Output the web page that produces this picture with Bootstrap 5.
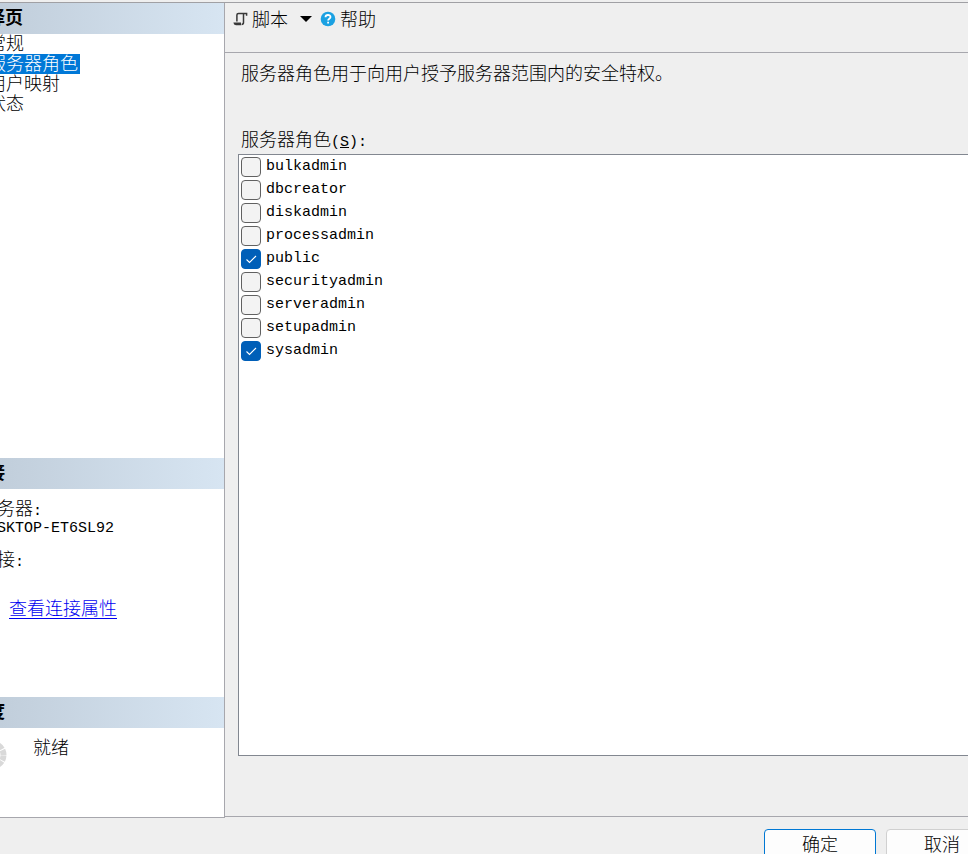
<!DOCTYPE html>
<html lang="zh-CN">
<head>
<meta charset="utf-8">
<meta name="viewport" content="width=device-width, initial-scale=1">
<title>登录属性</title>
<link href="https://cdn.jsdelivr.net/npm/bootstrap@5.3.0/dist/css/bootstrap.min.css" rel="stylesheet">
<style>
body { background: #efefef; color: #000; font-family: "Noto Sans CJK SC", sans-serif; font-weight: 300; font-size: 18px; line-height: 20px; }
.latin { font-family: "Liberation Mono", monospace; font-size: 15px; font-weight: 400; }
.work-area { border-top: 1px solid #a0a0a4; margin-top: 2px; min-height: 0; }
.side { width: 225px; background: #fff; border-right: 1px solid #a7a7ad; border-bottom: 1px solid #a7a7ad; }
.side-title { height: 31px; line-height: 27px; font-size: 18px; font-weight: 700; color: #000; background: linear-gradient(90deg, #c1cedb, #d7e5f2); }
.side-title span { margin-left: -31px; }
.page-list { margin-left: -12px; }
.page-list a { color: #000; text-decoration: none; line-height: 16px; padding: 0 2px 4px 0; }
.page-list a.active { background: #0078d7; color: #fff; }
.connection { height: 239px; }
.connection-info { margin-left: -21px; padding-top: 8px; }
.connection-info dt { font-weight: 300; height: 23px; }
.connection-info dd { line-height: 18px; margin-bottom: 10px; }
.connection-link { color: #0000f0; margin: 40px 0 0 9px; line-height: 20px; text-underline-offset: 3px; text-decoration-thickness: 1px; }
.connection-info dl { height: 60px; }
.progress-panel { height: 120px; }
.progress-state { margin-left: -23px; padding-top: 8px; gap: 26px; }
.progress-state svg { margin-top: 4px; }
.content-pane { border-bottom: 1px solid #a7a7ad; margin-bottom: 1px; }
.toolbar { height: 50px; padding: 6px 8px; border-bottom: 1px solid #a7a7ad; }
.tool { border: 0; background: none; padding: 0; color: #000; font-weight: 300; line-height: 18px; height: 20px; }
.tool span { padding-bottom: 2px; }
.roles { padding: 9px 0 60px 13px; }
.roles-note { margin: 0 3px 46px; }
.roles-label { margin: 0 3px 1px; }
.roles-box { background: #fff; border: 1px solid #828790; border-right: 0; }
.role { height: 23px; padding-left: 2px; gap: 5px; }
.role label { line-height: 24px; color: #000; }
.role .form-check-input { width: 20px; height: 20px; margin: 2px 0 0; border: 1px solid #616161; border-radius: 4px; background-color: #f3f3f3; }
.role .form-check-input:checked { background-color: #005fb8; border-color: #005fb8; background-size: 20px 20px; background-image: url("data:image/svg+xml,%3Csvg xmlns='http://www.w3.org/2000/svg' viewBox='0 0 20 20'%3E%3Cpath d='M5.5 10.5l3 3 6.5-6.5' fill='none' stroke='%23fff' stroke-width='1.1'/%3E%3C/svg%3E"); }
.actions { height: 36px; padding-top: 11px; gap: 10px; margin-right: -30px; }
.actions .btn { width: 112px; height: 34px; padding: 0 0 6px; line-height: 26px; font-size: 18px; font-weight: 300; background: #fdfdfd; border: 1px solid #d0d0d0; border-radius: 4px; color: #000; }
.actions .btn-ok { border-color: #0078d4; }
</style>
</head>
<body class="vh-100 overflow-hidden d-flex flex-column">
<div class="work-area d-flex flex-grow-1">
  <aside class="side d-flex flex-column flex-shrink-0 overflow-hidden">
    <section class="flex-grow-1">
      <h2 class="side-title m-0 text-nowrap"><span>选择页</span></h2>
      <nav class="page-list d-flex flex-column align-items-start text-nowrap">
        <a href="#general">常规</a>
        <a href="#roles" class="active" aria-current="page">服务器角色</a>
        <a href="#mapping">用户映射</a>
        <a href="#status">状态</a>
      </nav>
    </section>
    <section class="connection">
      <h2 class="side-title m-0 text-nowrap"><span>连接</span></h2>
      <div class="connection-info text-nowrap">
        <dl class="m-0">
          <dt>服务器<span class="latin">:</span></dt>
          <dd class="latin">DESKTOP-ET6SL92</dd>
          <dt>连接<span class="latin">:</span></dt>
        </dl>
      </div>
      <a class="connection-link d-inline-block" href="#connection">查看连接属性</a>
    </section>
    <section class="progress-panel">
      <h2 class="side-title m-0 text-nowrap"><span>进度</span></h2>
      <div class="progress-state d-flex align-items-start">
        <svg width="30" height="30" viewBox="0 0 30 30" aria-hidden="true"><circle cx="15" cy="15" r="11.5" fill="none" stroke="#d9d9d9" stroke-width="6" stroke-dasharray="5 1.02" stroke-dashoffset="-.5"/></svg>
        <span>就绪</span>
      </div>
    </section>
  </aside>
  <main class="content-pane flex-grow-1 d-flex flex-column">
    <div class="toolbar d-flex align-items-start">
      <button type="button" class="tool d-flex align-items-center">
        <svg class="me-1" width="15" height="14" viewBox="0 0 15 14" aria-hidden="true"><path d="M3.9 9.5V3Q3.9 1.4 5.5 1.4H13.6V3.8M10.5 1.8V10.5Q10.5 12.4 8.6 12.4" fill="none" stroke="#383838" stroke-width="1.5"/><path d="M.4 10.6H8V13.2H3Q.6 13.2 .4 10.6z" fill="#383838"/></svg>
        <span>脚本</span>
        <svg class="ms-2" width="20" height="8" viewBox="0 0 20 8" aria-hidden="true"><path d="M4 1h12L10 7z" fill="#000"/></svg>
      </button>
      <button type="button" class="tool d-flex align-items-center ms-1">
        <svg width="16" height="16" viewBox="0 0 16 16" aria-hidden="true"><circle cx="8" cy="8" r="7.3" fill="#1ba1e2"/><path d="M5.5 6.2C5.5 3.3 10.5 3.3 10.5 6.1 10.5 7.8 8.1 7.8 8.1 9.6M8.1 10.8v1.8" fill="none" stroke="#fff" stroke-width="1.8"/></svg>
        <span class="ms-1">帮助</span>
      </button>
    </div>
    <div class="roles d-flex flex-column flex-grow-1">
      <p class="roles-note">服务器角色用于向用户授予服务器范围内的安全特权。</p>
      <div class="roles-label" id="roles-label">服务器角色<span class="latin">(<u>S</u>):</span></div>
      <div class="roles-box flex-grow-1" role="group" aria-labelledby="roles-label">
        <div class="role d-flex align-items-start"><input class="form-check-input" type="checkbox" id="r1"><label class="latin" for="r1">bulkadmin</label></div>
        <div class="role d-flex align-items-start"><input class="form-check-input" type="checkbox" id="r2"><label class="latin" for="r2">dbcreator</label></div>
        <div class="role d-flex align-items-start"><input class="form-check-input" type="checkbox" id="r3"><label class="latin" for="r3">diskadmin</label></div>
        <div class="role d-flex align-items-start"><input class="form-check-input" type="checkbox" id="r4"><label class="latin" for="r4">processadmin</label></div>
        <div class="role d-flex align-items-start"><input class="form-check-input" type="checkbox" id="r5" checked><label class="latin" for="r5">public</label></div>
        <div class="role d-flex align-items-start"><input class="form-check-input" type="checkbox" id="r6"><label class="latin" for="r6">securityadmin</label></div>
        <div class="role d-flex align-items-start"><input class="form-check-input" type="checkbox" id="r7"><label class="latin" for="r7">serveradmin</label></div>
        <div class="role d-flex align-items-start"><input class="form-check-input" type="checkbox" id="r8"><label class="latin" for="r8">setupadmin</label></div>
        <div class="role d-flex align-items-start"><input class="form-check-input" type="checkbox" id="r9" checked><label class="latin" for="r9">sysadmin</label></div>
      </div>
    </div>
  </main>
</div>
<footer class="actions d-flex justify-content-end flex-shrink-0">
  <button type="button" class="btn btn-ok">确定</button>
  <button type="button" class="btn">取消</button>
</footer>
<script src="https://cdn.jsdelivr.net/npm/bootstrap@5.3.0/dist/js/bootstrap.bundle.min.js"></script>
</body>
</html>
